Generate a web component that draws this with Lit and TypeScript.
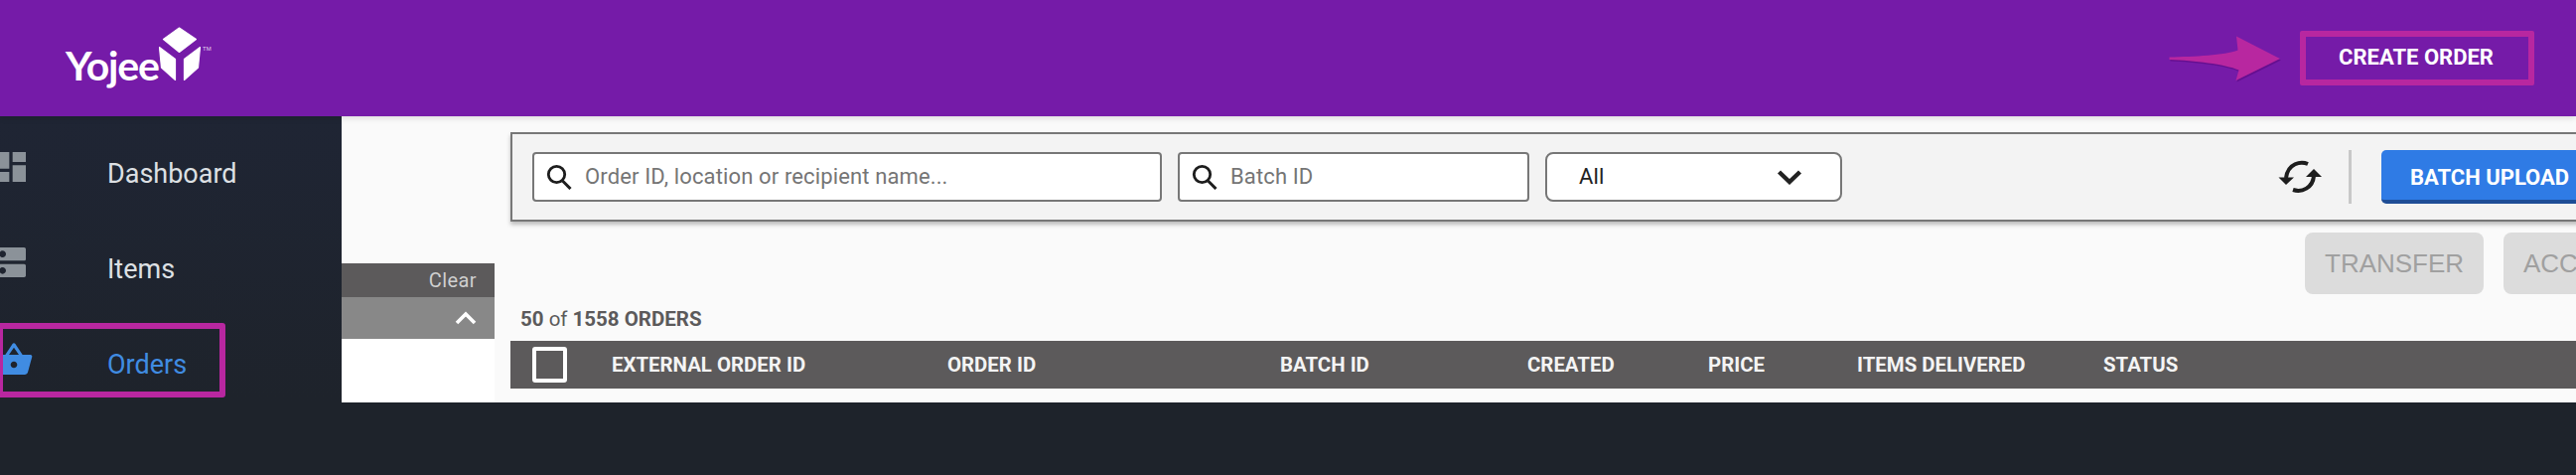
import { LitElement, html, css, svg } from "lit";
import { customElement } from "lit/decorators.js";

const searchIcon = html`<svg class="search" viewBox="0 0 26 26" width="26" height="26"><circle cx="10.5" cy="10.5" r="8.2" fill="none" stroke="#1d1d1d" stroke-width="2.8"/><path d="M16.5 17 L24.5 25" stroke="#1d1d1d" stroke-width="3" fill="none"/></svg>`;

const columns = ["EXTERNAL ORDER ID", "ORDER ID", "BATCH ID", "CREATED", "PRICE", "ITEMS DELIVERED", "STATUS"];

@customElement("app-root")
export class AppRoot extends LitElement {
  static styles = css`
    :host { display: block; width: 2594px; height: 478px; overflow: hidden; background: #1e232b; font-family: Roboto, "Liberation Sans", sans-serif; }
    .header { height: 117px; background: #751ba8; display: flex; align-items: center; position: relative; z-index: 2; box-shadow: 0 2px 6px rgba(0,0,0,.12); padding-right: 42px; box-sizing: border-box; }
    .logo { display: flex; align-items: flex-start; padding-left: 66px; height: 117px; }
    .logo-text { font-family: Lato, sans-serif; font-weight: 700; font-size: 41px; letter-spacing: -1.2px; color: #fff; margin-top: 42px; line-height: 48px; width: 94px; }
    .cube { margin-top: 27px; }
    .tm { font-family: "Liberation Sans", sans-serif; font-size: 6px; color: #e6d4ee; margin-top: 46px; margin-left: 2px; }
    .arrow { margin-left: auto; margin-right: 6px; }
    .create { width: 236px; height: 55px; box-sizing: border-box; border: 6px solid #b827a0; border-radius: 2px; display: flex; align-items: center; justify-content: center; color: #fff; font-weight: 700; font-size: 22px; padding-bottom: 3px; padding-right: 2px; }
    .body { display: flex; height: 288px; }
    .sidebar { width: 344px; flex: none; height: 361px; background: linear-gradient(#1f2534, #1e232b 288px); position: relative; padding-top: 10px; box-sizing: border-box; }
    .item { height: 96px; display: flex; align-items: center; font-size: 27px; color: #dde0e4; }
    .item svg { align-self: flex-start; margin-top: 21px; margin-left: -9px; fill: #8b9299; flex: none; }
    .item span { margin-left: 77px; margin-top: -1px; }
    .item.active { color: #408ce2; }
    .item.active svg { fill: #408ce2; margin-left: -6px; margin-top: 23px; }
    .item.active span { margin-left: 74px; }
    .mark { position: absolute; left: -3px; top: 208px; width: 230px; height: 75px; box-sizing: border-box; border: 6px solid #b827a0; border-radius: 3px; }
    .content { flex: 1; background: #fafafa; display: flex; min-width: 0; }
    .filters { width: 154px; flex: none; padding-top: 148px; display: flex; flex-direction: column; }
    .clear { height: 34px; background: #5c5a5b; color: #cfcfcf; font-size: 20px; letter-spacing: .4px; display: flex; align-items: center; justify-content: flex-end; padding-right: 18px; }
    .collapse { height: 42px; background: #888; display: flex; align-items: center; justify-content: flex-end; padding-right: 18px; }
    .filter-rest { flex: 1; background: #fff; }
    .main { width: 2200px; flex: none; margin-left: 16px; padding-top: 16px; }
    .toolbar { height: 90px; box-sizing: border-box; border: 2px solid #777; background: #f3f3f3; box-shadow: 0 3px 4px rgba(0,0,0,.25); display: flex; align-items: center; padding-left: 20px; }
    .field { height: 50px; box-sizing: border-box; border: 2px solid #777; border-radius: 4px; background: #fff; display: flex; align-items: center; padding-left: 12px; font-size: 22px; letter-spacing: .13px; color: #757575; flex: none; }
    .field span { margin-top: -2px; }
    .search { margin-right: 13px; flex: none; }
    .f1 { width: 634px; }
    .f2 { width: 354px; margin-left: 16px; }
    .select { width: 299px; margin-left: 16px; border-radius: 8px; padding-left: 32px; color: #222; justify-content: space-between; padding-right: 38px; }
    .sync { margin-left: 430px; margin-right: 10px; flex: none; }
    .sep { width: 3px; height: 54px; background: #c8c8c8; flex: none; margin-right: 30px; }
    .batch { height: 54px; width: 240px; box-sizing: border-box; background: #2f7be5; border-bottom: 4px solid #1e4d96; border-radius: 5px; color: #fff; font-weight: 700; font-size: 22px; padding-left: 29px; padding-top: 4px; display: flex; align-items: center; flex: none; }
    .actions { display: flex; gap: 20px; padding-left: 1807px; margin-top: 11px; height: 62px; }
    .btn { height: 62px; width: 180px; box-sizing: border-box; background: #dcdcdc; border-radius: 8px; color: #a0a0a0; font-family: "Liberation Sans", sans-serif; font-size: 26px; display: flex; align-items: center; padding-left: 20px; flex: none; }
    .count { margin-left: 10px; height: 47px; display: flex; align-items: center; font-size: 20.5px; font-weight: 700; color: #5c5a5b; white-space: pre; padding-top: 2px; box-sizing: border-box; }
    .count i { font-style: normal; font-weight: 400; }
    .thead { height: 48px; background: #5c5a5b; display: grid; grid-template-columns: 102px 338px 335px 249px 182px 150px 248px 1fr; align-items: center; color: #f4f4f4; font-weight: 700; font-size: 20.4px; }
    .check { width: 35px; height: 36px; box-sizing: border-box; border: 4px solid #fff; border-radius: 3px; margin-left: 22px; }
  `;

  render() {
    return html`
      <div class="header">
        <div class="logo">
          <div class="logo-text">Yojee</div>
          <svg class="cube" width="42" height="56" viewBox="160 27 42 56" fill="#fff" stroke="#fff" stroke-width="1.2" stroke-linejoin="round">
            <path d="M180.5 28 L197.5 39.5 L180.5 52.5 L164.5 39.5 Z"/>
            <path d="M160.5 47.5 L176.5 59.5 L176.5 80.5 L162.5 68 Z"/>
            <path d="M201.5 47.5 L185.5 59.5 L185.5 80.5 L199.5 68 Z"/>
          </svg>
          <span class="tm">TM</span>
        </div>
        <svg class="arrow" width="140" height="70" viewBox="0 3.5 140 70">
          <path d="M14.5 37 C40 36.5 70 35 83.5 30 L82 16 L126 38.5 L81.5 60.5 L84.5 50 C70 44 40 40.5 14.5 39.5 Z" fill="#650f90" transform="translate(1 1.5)"/>
          <path d="M14.5 37 C40 36.5 70 35 83.5 30 L82 16 L126 38.5 L81.5 60.5 L84.5 50 C70 44 40 40.5 14.5 39.5 Z" fill="#b827a0"/>
        </svg>
        <div class="create">CREATE ORDER</div>
      </div>
      <div class="body">
        <div class="sidebar">
          <div class="item">
            <svg width="40" height="40" viewBox="0 0 24 24"><path d="M3 13h8V3H3v10zm0 8h8v-6H3v6zm10 0h8V11h-8v10zm0-18v6h8V3h-8z"/></svg>
            <span>Dashboard</span>
          </div>
          <div class="item">
            <svg width="40" height="40" viewBox="0 0 24 24"><path d="M20 13H4c-.55 0-1 .45-1 1v6c0 .55.45 1 1 1h16c.55 0 1-.45 1-1v-6c0-.55-.45-1-1-1zM7 19c-1.1 0-2-.9-2-2s.9-2 2-2 2 .9 2 2-.9 2-2 2zM20 3H4c-.55 0-1 .45-1 1v6c0 .55.45 1 1 1h16c.55 0 1-.45 1-1V4c0-.55-.45-1-1-1zM7 9c-1.1 0-2-.9-2-2s.9-2 2-2 2 .9 2 2-.9 2-2 2z"/></svg>
            <span>Items</span>
          </div>
          <div class="item active">
            <svg width="40" height="40" viewBox="0 0 24 24"><path d="M17.21 9l-4.38-6.56c-.19-.28-.51-.42-.83-.42-.32 0-.64.14-.83.43L6.79 9H2c-.55 0-1 .45-1 1 0 .09.01.18.04.27l2.54 9.27c.23.84 1 1.46 1.92 1.46h13c.92 0 1.69-.62 1.93-1.46l2.54-9.27L23 10c0-.55-.45-1-1-1h-4.79zM9 9l3-4.4L15 9H9zm3 8c-1.1 0-2-.9-2-2s.9-2 2-2 2 .9 2 2-.9 2-2 2z"/></svg>
            <span>Orders</span>
          </div>
          <div class="mark"></div>
        </div>
        <div class="content">
          <div class="filters">
            <div class="clear">Clear</div>
            <div class="collapse">
              <svg width="22" height="14" viewBox="0 0 22 14"><path d="M2 12 L11 3 L20 12" fill="none" stroke="#fff" stroke-width="3.6"/></svg>
            </div>
            <div class="filter-rest"></div>
          </div>
          <div class="main">
            <div class="toolbar">
              <div class="field f1">${searchIcon}<span>Order ID, location or recipient name...</span></div>
              <div class="field f2">${searchIcon}<span>Batch ID</span></div>
              <div class="field select"><span>All</span>
                <svg width="26" height="16" viewBox="0 0 26 16"><path d="M2.5 3 L13 13 L23.5 3" fill="none" stroke="#222" stroke-width="4.4"/></svg>
              </div>
              <svg class="sync" width="70" height="60" viewBox="0 -2 70 60">
                ${svg`<path d="M39 15 C32 12 19 14 17 29" fill="none" stroke="#1d1d1d" stroke-width="4"/>
                <path d="M9.5 28.5 L25 28.5 L17 36 Z" fill="#1d1d1d"/>
                <path d="M24 41 C33 44 44 39 45 27" fill="none" stroke="#1d1d1d" stroke-width="4"/>
                <path d="M37 28 L53 28 L45 20 Z" fill="#1d1d1d"/>`}
              </svg>
              <div class="sep"></div>
              <div class="batch">BATCH UPLOAD</div>
            </div>
            <div class="actions">
              <div class="btn">TRANSFER</div>
              <div class="btn">ACCEPT</div>
            </div>
            <div class="count">50 <i>of</i> 1558 ORDERS</div>
            <div class="thead">
              <div><div class="check"></div></div>
              ${columns.map((c) => html`<div>${c}</div>`)}
            </div>
          </div>
        </div>
      </div>
    `;
  }
}
